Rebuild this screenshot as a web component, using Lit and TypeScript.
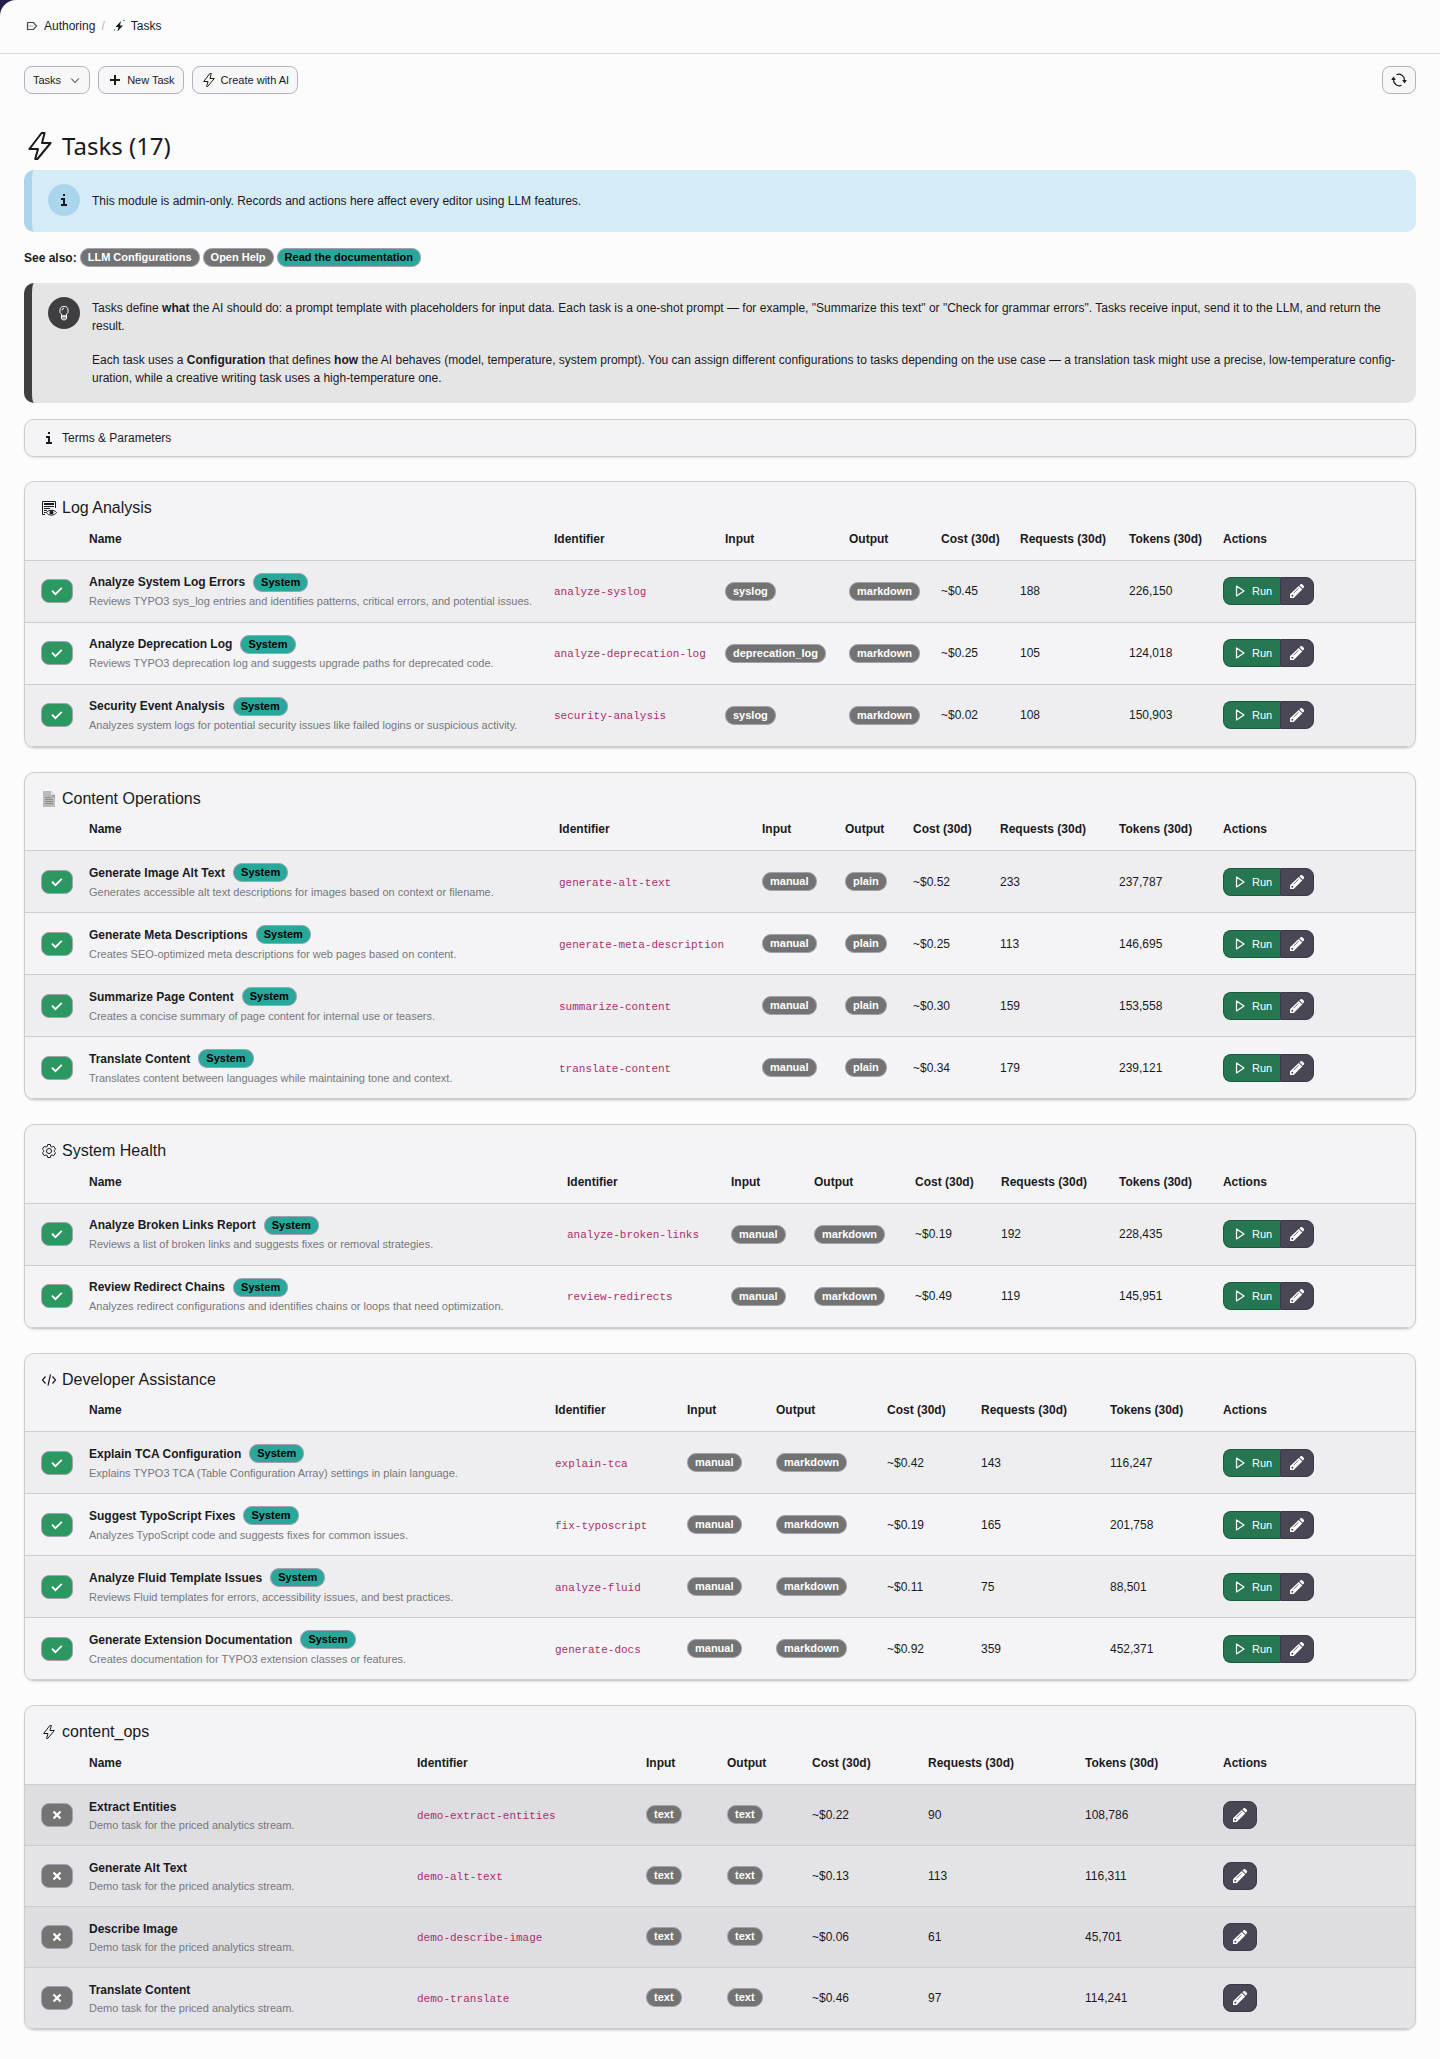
import { LitElement, html, css, svg } from "lit";
import { customElement } from "lit/decorators.js";

const wrap = (size: number, body: unknown, cls = "icon") =>
  html`<svg class=${cls} width=${size} height=${size} viewBox="0 0 16 16" aria-hidden="true">${body}</svg>`;

const bolt = svg`<path d="M8.800 1.500h1.500L9 6.500h4.300L6.700 14.500H5.600L7 9.500H2.700z" fill="none" stroke="currentColor" stroke-linejoin="round"/>`;
const info = svg`<path d="M7 2h2v2H7zM5 6h4v6h2v2H5v-2h2V8H5z" fill="currentColor"/>`;

const icons: Record<string, unknown> = {
  log: svg`<path d="M4 14.500H1.500v-13h13V8" fill="none" stroke="currentColor"/><path d="M3 3h10v2H3zM3 6h10v1H3zM3 8h6v1H3zM3 10h3v1H3zM3 12h2v1H3z" fill="currentColor"/><path d="M5.500 12.500C7.500 9.500 13.500 9.500 15.500 12.500 13.500 16 7.500 16 5.500 12.500z" fill="#f4f4f6" stroke="currentColor"/><circle cx="10.500" cy="12.500" r="2" fill="currentColor"/>`,
  page: svg`<path d="M2 0h8l4 4v12H2z" fill="#bbb"/><path d="M10 0v4h4z" fill="#e4e4e4"/><path d="M10 4h4v3z" fill="#999"/><path d="M4 6h6v1H4zM4 8h8v1H4zM4 10h8v1H4zM4 12h8v1H4z" fill="#8c8c8c"/>`,
  gear: svg`<path d="M6.700 1.500h2.600l.4 1.900 1.300.7 1.800-.7 1.800 2.700-1.300 1.200v1.400l1.300 1.200-1.800 2.700-1.800-.6-1.300.7-.4 1.800H6.700l-.4-1.800-1.300-.7-1.800.6-1.800-2.700 1.300-1.200V7.300L1.400 6.100l1.800-2.700 1.800.7 1.300-.7z" fill="none" stroke="currentColor" stroke-linejoin="round"/><circle cx="8" cy="8" r="2.500" fill="none" stroke="currentColor"/>`,
  code: svg`<path d="M4.500 4.500 1.500 8l3 3.500M11.500 4.500l3 3.500-3 3.500M9.500 2.500l-2.500 11" fill="none" stroke="currentColor" stroke-width="1.200"/>`,
  bolt,
};

interface Task {
  name: string;
  text: string;
  id: string;
  input: string;
  output: string;
  cost: string;
  requests: string;
  tokens: string;
}

interface Group {
  title: string;
  icon: string;
  demo?: boolean;
  cols: number[];
  tasks: Task[];
}

const t = (name: string, text: string, id: string, input: string, output: string, cost: string, requests: string, tokens: string): Task =>
  ({ name, text, id, input, output, cost, requests, tokens });

const demoText = "Demo task for the priced analytics stream.";

const groups: Group[] = [
  {
    title: "Log Analysis", icon: "log", cols: [56, 465, 171, 124, 92, 79, 109, 94, 200],
    tasks: [
      t("Analyze System Log Errors", "Reviews TYPO3 sys_log entries and identifies patterns, critical errors, and potential issues.", "analyze-syslog", "syslog", "markdown", "~$0.45", "188", "226,150"),
      t("Analyze Deprecation Log", "Reviews TYPO3 deprecation log and suggests upgrade paths for deprecated code.", "analyze-deprecation-log", "deprecation_log", "markdown", "~$0.25", "105", "124,018"),
      t("Security Event Analysis", "Analyzes system logs for potential security issues like failed logins or suspicious activity.", "security-analysis", "syslog", "markdown", "~$0.02", "108", "150,903"),
    ],
  },
  {
    title: "Content Operations", icon: "page", cols: [56, 470, 203, 83, 68, 87, 119, 104, 200],
    tasks: [
      t("Generate Image Alt Text", "Generates accessible alt text descriptions for images based on context or filename.", "generate-alt-text", "manual", "plain", "~$0.52", "233", "237,787"),
      t("Generate Meta Descriptions", "Creates SEO-optimized meta descriptions for web pages based on content.", "generate-meta-description", "manual", "plain", "~$0.25", "113", "146,695"),
      t("Summarize Page Content", "Creates a concise summary of page content for internal use or teasers.", "summarize-content", "manual", "plain", "~$0.30", "159", "153,558"),
      t("Translate Content", "Translates content between languages while maintaining tone and context.", "translate-content", "manual", "plain", "~$0.34", "179", "239,121"),
    ],
  },
  {
    title: "System Health", icon: "gear", cols: [56, 478, 164, 83, 101, 86, 118, 104, 200],
    tasks: [
      t("Analyze Broken Links Report", "Reviews a list of broken links and suggests fixes or removal strategies.", "analyze-broken-links", "manual", "markdown", "~$0.19", "192", "228,435"),
      t("Review Redirect Chains", "Analyzes redirect configurations and identifies chains or loops that need optimization.", "review-redirects", "manual", "markdown", "~$0.49", "119", "145,951"),
    ],
  },
  {
    title: "Developer Assistance", icon: "code", cols: [56, 466, 132, 89, 111, 94, 129, 113, 200],
    tasks: [
      t("Explain TCA Configuration", "Explains TYPO3 TCA (Table Configuration Array) settings in plain language.", "explain-tca", "manual", "markdown", "~$0.42", "143", "116,247"),
      t("Suggest TypoScript Fixes", "Analyzes TypoScript code and suggests fixes for common issues.", "fix-typoscript", "manual", "markdown", "~$0.19", "165", "201,758"),
      t("Analyze Fluid Template Issues", "Reviews Fluid templates for errors, accessibility issues, and best practices.", "analyze-fluid", "manual", "markdown", "~$0.11", "75", "88,501"),
      t("Generate Extension Documentation", "Creates documentation for TYPO3 extension classes or features.", "generate-docs", "manual", "markdown", "~$0.92", "359", "452,371"),
    ],
  },
  {
    title: "content_ops", icon: "bolt", demo: true, cols: [56, 328, 229, 81, 85, 116, 157, 138, 200],
    tasks: [
      t("Extract Entities", demoText, "demo-extract-entities", "text", "text", "~$0.22", "90", "108,786"),
      t("Generate Alt Text", demoText, "demo-alt-text", "text", "text", "~$0.13", "113", "116,311"),
      t("Describe Image", demoText, "demo-describe-image", "text", "text", "~$0.06", "61", "45,701"),
      t("Translate Content", demoText, "demo-translate", "text", "text", "~$0.46", "97", "114,241"),
    ],
  },
];

@customElement("app-root")
export class AppRoot extends LitElement {
  static styles = css`
    :host {
      display: block;
      background: #291f45;
      color: #1a1a1e;
      font: 12px/18px "Liberation Sans", Arial, sans-serif;
    }
    * { box-sizing: border-box; }
    .icon { display: block; flex: none; }
    .page { background: #fcfcfc; border-top-left-radius: 16px; padding-bottom: 5px; }
    .crumbs {
      display: flex; align-items: center; height: 54px; padding: 0 24px;
      border-bottom: 1px solid #dededf;
    }
    .crumbs ol { display: flex; align-items: center; margin: 0 0 2px; padding: 0; list-style: none; }
    .crumbs li { display: flex; align-items: center; }
    .crumbs li + li::before { content: "/"; color: #b4b4b8; padding: 0 6px; }
    .crumbs a { display: flex; align-items: center; gap: 4px; color: inherit; text-decoration: none; }
    .bar { display: flex; gap: 8px; padding: 12px 24px 0; }
    .btn {
      display: flex; align-items: center; gap: 4px; height: 28px; padding: 0 8px;
      background: #f7f7f8; border: 1px solid #b3b0bf; border-radius: 8px;
      color: #1a1a1e; font: 11px/16px "Liberation Sans", Arial, sans-serif; cursor: pointer;
    }
    .btn.drop { gap: 8px; }
    .btn.reload { margin-left: auto; }
    main { padding: 0 24px; }
    h1 {
      display: flex; align-items: center; gap: 6px; margin: 36px 0 8px;
      font: 400 24px/32px "Noto Sans", "Open Sans", sans-serif;
    }
    .note { display: flex; gap: 12px; border-left: 8px solid; border-radius: 10px; padding: 14px 16px; }
    .note.info { background: #d5ebf6; border-color: #abd5eb; margin-bottom: 16px; min-height: 62px; }
    .note.tip { background: #e5e5e5; border-color: #3f3f43; margin-bottom: 16px; }
    .mark {
      display: flex; align-items: center; justify-content: center; flex: none;
      width: 32px; height: 32px; border-radius: 50%;
    }
    .info .mark { background: #abd5eb; }
    .info p { padding-top: 8px; }
    .tip .mark { background: #3f3f43; color: #fff; }
    .note p { margin: 0; }
    .tip div { padding: 2px 0; }
    .tip p + p { margin-top: 16px; }
    .also { display: flex; align-items: center; gap: 3px; margin: 0 0 16px; height: 19px; font-weight: 700; }
    .badge {
      display: inline-block; padding: 1px 7px; border: 1px solid #a5a2b0; border-radius: 9px;
      background: #737373; color: #fff; font: 700 11px/15px "Liberation Sans", Arial, sans-serif;
      text-decoration: none; vertical-align: middle;
    }
    .badge.teal { background: #2aa79b; color: #000; }
    .card {
      background: #f4f4f6; border: 1px solid #cdcdd0; border-radius: 10px;
      box-shadow: 0 1px 2px #0000001f; margin-bottom: 24px; overflow: hidden;
    }
    .terms summary {
      display: flex; align-items: center; gap: 5px; padding: 9px 16px; list-style: none; cursor: pointer;
    }
    h2 {
      display: flex; align-items: center; gap: 5px; margin: 0; padding: 16px 16px 4px;
      font: 400 16px/20px "Liberation Sans", Arial, sans-serif;
    }
    table { width: 100%; table-layout: fixed; border-collapse: collapse; }
    th, td { padding: 0 8px; text-align: left; vertical-align: middle; border-bottom: 1px solid #cdcdd0; }
    th { height: 38px; padding-bottom: 4px; }
    td:first-child, th:first-child { padding-left: 16px; padding-right: 0; }
    td { height: 62px; }
    tbody tr:nth-child(odd) { background: #eeeef0; }
    .demo td { height: 61px; }
    .demo tbody tr { background: #e4e4e8; }
    .demo tbody tr:nth-child(odd) { background: #dedee2; }
    .state {
      display: flex; align-items: center; justify-content: center; width: 32px; height: 24px;
      border: 1px solid #a5a2b0; border-radius: 8px; background: #2a9860; color: #fff;
    }
    .demo .state { background: #737373; }
    .name { display: flex; align-items: center; gap: 8px; font-weight: 700; height: 20px; }
    .text { color: #77777c; font-size: 11px; line-height: 18px; white-space: nowrap; }
    .demo .text { line-height: 16px; }
    code { color: #ad2c6d; font: 11px/16px "Liberation Mono", monospace; white-space: nowrap; }
    .acts { display: flex; }
    .run, .edit {
      display: flex; align-items: center; height: 28px; gap: 4px; border: 1px solid #3b3848;
      background: #494655; color: #fff; font: 11px/16px "Liberation Sans", Arial, sans-serif;
      padding: 0 8px; cursor: pointer; border-radius: 8px;
    }
    .run { background: #267652; border-color: #175b3c; border-radius: 8px 0 0 8px; border-right: 0; }
    .run + .edit { border-radius: 0 8px 8px 0; }
  `;

  private row(task: Task, demo?: boolean) {
    return html`<tr>
      <td><span class="state" role="img" aria-label=${demo ? "Inactive" : "Active"}>${demo
        ? wrap(16, svg`<path d="M4.500 4.500l7 7M11.500 4.500l-7 7" stroke="currentColor" stroke-width="2.200"/>`)
        : wrap(16, svg`<path d="M3 7.700l3.400 3.500 6.400-6.400" fill="none" stroke="currentColor" stroke-width="1.800"/>`)}</span></td>
      <td>
        <div class="name">${task.name}${demo ? "" : html`<span class="badge teal">System</span>`}</div>
        <div class="text">${task.text}</div>
      </td>
      <td><code>${task.id}</code></td>
      <td><span class="badge">${task.input}</span></td>
      <td><span class="badge">${task.output}</span></td>
      <td>${task.cost}</td>
      <td>${task.requests}</td>
      <td>${task.tokens}</td>
      <td><div class="acts">
        ${demo ? "" : html`<button class="run" type="button">${wrap(16, svg`<path d="M4.500 3v10L12 8z" fill="none" stroke="currentColor" stroke-width="1.200" stroke-linejoin="round"/>`)}Run</button>`}
        <button class="edit" type="button" aria-label="Edit">${wrap(16, svg`<path d="M1 15v-3.700L9.700 3l3.500 3.500L4.700 15zM10.400 2.300 12 .900h.9l2.200 2.200v.9l-1.300 1.700z" fill="currentColor"/><path d="M4.500 10.300l5-5" stroke="#494655" stroke-width=".8"/><circle cx="3.300" cy="12.700" r="1" fill="#494655"/>`)}</button>
      </div></td>
    </tr>`;
  }

  private group(g: Group) {
    const total = g.cols.reduce((a, b) => a + b, 0);
    return html`<section class="card ${g.demo ? "demo" : ""}">
      <h2>${wrap(16, icons[g.icon])}${g.title}</h2>
      <table>
        <colgroup>${g.cols.map((c) => html`<col style="width:${(c / total) * 100}%">`)}</colgroup>
        <thead><tr>
          <th></th><th>Name</th><th>Identifier</th><th>Input</th><th>Output</th>
          <th>Cost (30d)</th><th>Requests (30d)</th><th>Tokens (30d)</th><th>Actions</th>
        </tr></thead>
        <tbody>${g.tasks.map((task) => this.row(task, g.demo))}</tbody>
      </table>
    </section>`;
  }

  render() {
    return html`<div class="page">
      <nav class="crumbs" aria-label="Breadcrumb"><ol>
        <li><a href="#">${wrap(16, svg`<path d="M3.500 4.500h6L12.500 8l-3 3.500h-6z" fill="none" stroke="#48484c" stroke-width="1.200"/><path d="M4 8h5" stroke="#8fb8b4"/>`)}Authoring</a></li>
        <li><a href="#">${wrap(16, svg`<path d="M10 3 4.500 9h3L6.500 13.500l5.500-6H9z" fill="currentColor"/><path d="M12 2h2v1h-2zM3 11h1v2H3z" fill="#3bb3a6"/>`)}Tasks</a></li>
      </ol></nav>
      <div class="bar">
        <button class="btn drop" type="button">Tasks${wrap(12, svg`<path d="M3 6l5 5.500L13 6" fill="none" stroke="currentColor" stroke-width="1.300"/>`)}</button>
        <button class="btn" type="button">${wrap(16, svg`<path d="M7 3h2v4h4v2H9v4H7V9H3V7h4z" fill="currentColor"/>`)}New Task</button>
        <button class="btn" type="button">${wrap(16, bolt)}Create with AI</button>
        <button class="btn reload" type="button" aria-label="Reload">${wrap(16, svg`<path d="M5.500 2.700A5.700 5.700 0 0 1 13.500 8M10.500 13.300A5.700 5.700 0 0 1 2.500 8" fill="none" stroke="currentColor" stroke-width="1.200"/><path d="M11.200 8h4.600l-2.300 3.500zM.2 8h4.600L2.500 4.500z" fill="currentColor"/>`)}</button>
      </div>
      <main>
        <h1>${wrap(32, bolt)}Tasks (17)</h1>
        <div class="note info"><span class="mark">${wrap(16, info)}</span>
          <p>This module is admin-only. Records and actions here affect every editor using LLM features.</p></div>
        <div class="also"><span>See also:</span>
          <a class="badge" href="#">LLM Configurations</a><a class="badge" href="#">Open Help</a><a class="badge teal" href="#">Read the documentation</a></div>
        <div class="note tip"><span class="mark">${wrap(16, svg`<path d="M5.500 11V9.300A4 4 0 0 1 3.900 5.500 4.100 4.100 0 0 1 8 1.400a4.100 4.100 0 0 1 4.100 4.100 4 4 0 0 1-1.600 3.800V11zM5.500 11v2.500l1 1.300h3l1-1.300V11zM5.500 13h5M6 5.400A2 2 0 0 1 8 3.400" fill="none" stroke="currentColor"/>`)}</span>
          <div>
            <p>Tasks define <b>what</b> the AI should do: a prompt template with placeholders for input data. Each task is a one-shot prompt — for example, "Summarize this text" or "Check for grammar errors". Tasks receive input, send it to the LLM, and return the result.</p>
            <p>Each task uses a <b>Configuration</b> that defines <b>how</b> the AI behaves (model, temperature, system prompt). You can assign different configurations to tasks depending on the use case — a translation task might use a precise, low-temperature config&shy;uration, while a creative writing task uses a high-temperature one.</p>
          </div></div>
        <details class="card terms"><summary>${wrap(16, info)}Terms &amp; Parameters</summary></details>
        ${groups.map((g) => this.group(g))}
      </main>
    </div>`;
  }
}
